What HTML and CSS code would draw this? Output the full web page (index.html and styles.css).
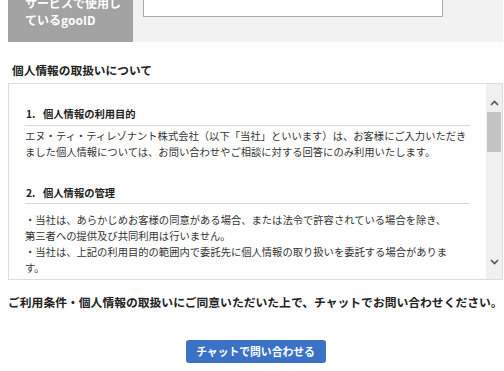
FILE: index.html
```html
<!DOCTYPE html>
<html lang="ja">
  <head>
    <meta charset="utf-8">
    <link rel="stylesheet" href="styles.css">
  </head>
  <body>
    <div class="page">
      <div class="form-row">
        <div class="form-label">サービスで使用し<br>ているgooID</div>
        <div class="form-field"><div class="field-box"></div></div>
      </div>

      <h2 class="terms-title">個人情報の取扱いについて</h2>

      <div class="terms-box">
        <div class="terms-body">
          <h3 class="terms-head"><span class="num">1.</span>個人情報の利用目的</h3>
          <p class="terms-text">エヌ・ティ・ティレゾナント株式会社（以下「当社」といいます）は、お客様にご入力いただきました個人情報については、お問い合わせやご相談に対する回答にのみ利用いたします。</p>

          <h3 class="terms-head second"><span class="num">2.</span>個人情報の管理</h3>
          <p class="terms-text list">・当社は、あらかじめお客様の同意がある場合、または法令で許容されている場合を除き、<br>第三者への提供及び共同利用は行いません。<br>・当社は、上記の利用目的の範囲内で委託先に個人情報の取り扱いを委託する場合がありま<br>す。</p>
        </div>
        <div class="scrollbar">
          <div class="sb-btn up">
            <svg width="9" height="8" viewBox="0 0 9 8"><polyline points="1,6 4.5,2.5 8,6" fill="none" stroke="#555" stroke-width="1.6"/></svg>
          </div>
          <div class="sb-thumb"></div>
          <div class="sb-track"></div>
          <div class="sb-btn down">
            <svg width="9" height="8" viewBox="0 0 9 8"><polyline points="1,2 4.5,5.5 8,2" fill="none" stroke="#555" stroke-width="1.6"/></svg>
          </div>
        </div>
      </div>

      <p class="agree">ご利用条件・個人情報の取扱いにご同意いただいた上で、チャットでお問い合わせください。</p>

      <div class="actions">
        <button class="chat-btn" type="button">チャットで問い合わせる</button>
      </div>
    </div>
  </body>
</html>
```

FILE: styles.css
```css
body {
  margin: 0;
  font-family: "Noto Sans CJK JP", sans-serif;
  color: #333;
  background: #fff;
}

.page {
  width: 495px;
  margin-left: 8px;
}

/* form row (page is scrolled, top is cut) */
.form-row {
  display: flex;
  margin-top: -20px;
  background: #f2f2f2;
}
.form-label {
  width: 125px;
  box-sizing: border-box;
  padding: 14px 0 14px 17px;
  background: #a3a3a3;
  color: #fff;
  font-size: 12px;
  font-weight: bold;
  line-height: 17px;
}
.form-field {
  padding: 7px 0 0 10px;
}
.field-box {
  width: 300px;
  height: 30px;
  box-sizing: border-box;
  background: #fff;
  border: 1px solid #aaa;
}

.terms-title {
  margin: 20px 0 5px 4px;
  font-size: 11.7px;
  line-height: 16px;
  font-weight: bold;
  color: #222;
}

.terms-box {
  display: flex;
  height: 197px;
  box-sizing: border-box;
  border: 1px solid #dcdcdc;
  overflow: hidden;
}
.terms-body {
  flex: 1;
  padding: 22px 16px 0 16px;
}
.terms-head {
  margin: 0;
  padding-bottom: 3px;
  border-bottom: 1px solid #d8d8d8;
  font-size: 10.3px;
  line-height: 16px;
  font-weight: bold;
  color: #222;
}
.terms-head.second {
  margin-top: 25px;
  padding-bottom: 2px;
}
.terms-head .num {
  display: inline-block;
  width: 17px;
  padding-left: 1px;
}
.terms-text {
  margin: 2px 0 0;
  font-size: 10.3px;
  line-height: 16px;
}
.terms-text.list {
  margin-top: 8px;
}

.scrollbar {
  width: 16px;
  display: flex;
  flex-direction: column;
  background: #f0f0f0;
}
.sb-btn {
  height: 28px;
  box-sizing: border-box;
  text-align: center;
}
.sb-btn svg {
  display: block;
  margin: 0 auto;
}
.sb-btn.up {
  padding-top: 15px;
}
.sb-btn.down {
  padding-top: 7px;
}
.sb-thumb {
  height: 40px;
  margin: 0 1px;
  background: #c4c4c4;
}
.sb-track {
  flex: 1;
}

.agree {
  margin: 13px 0 0;
  font-size: 11.8px;
  line-height: 18px;
  font-weight: bold;
  color: #222;
  white-space: nowrap;
}

.actions {
  margin-top: 26px;
  text-align: center;
}
.chat-btn {
  width: 140px;
  height: 23px;
  padding: 0;
  border: none;
  border-radius: 3px;
  background: #3b72c5;
  color: #fff;
  font-family: "Noto Sans CJK JP", sans-serif;
  font-size: 10.8px;
  font-weight: bold;
  line-height: 23px;
}
```
